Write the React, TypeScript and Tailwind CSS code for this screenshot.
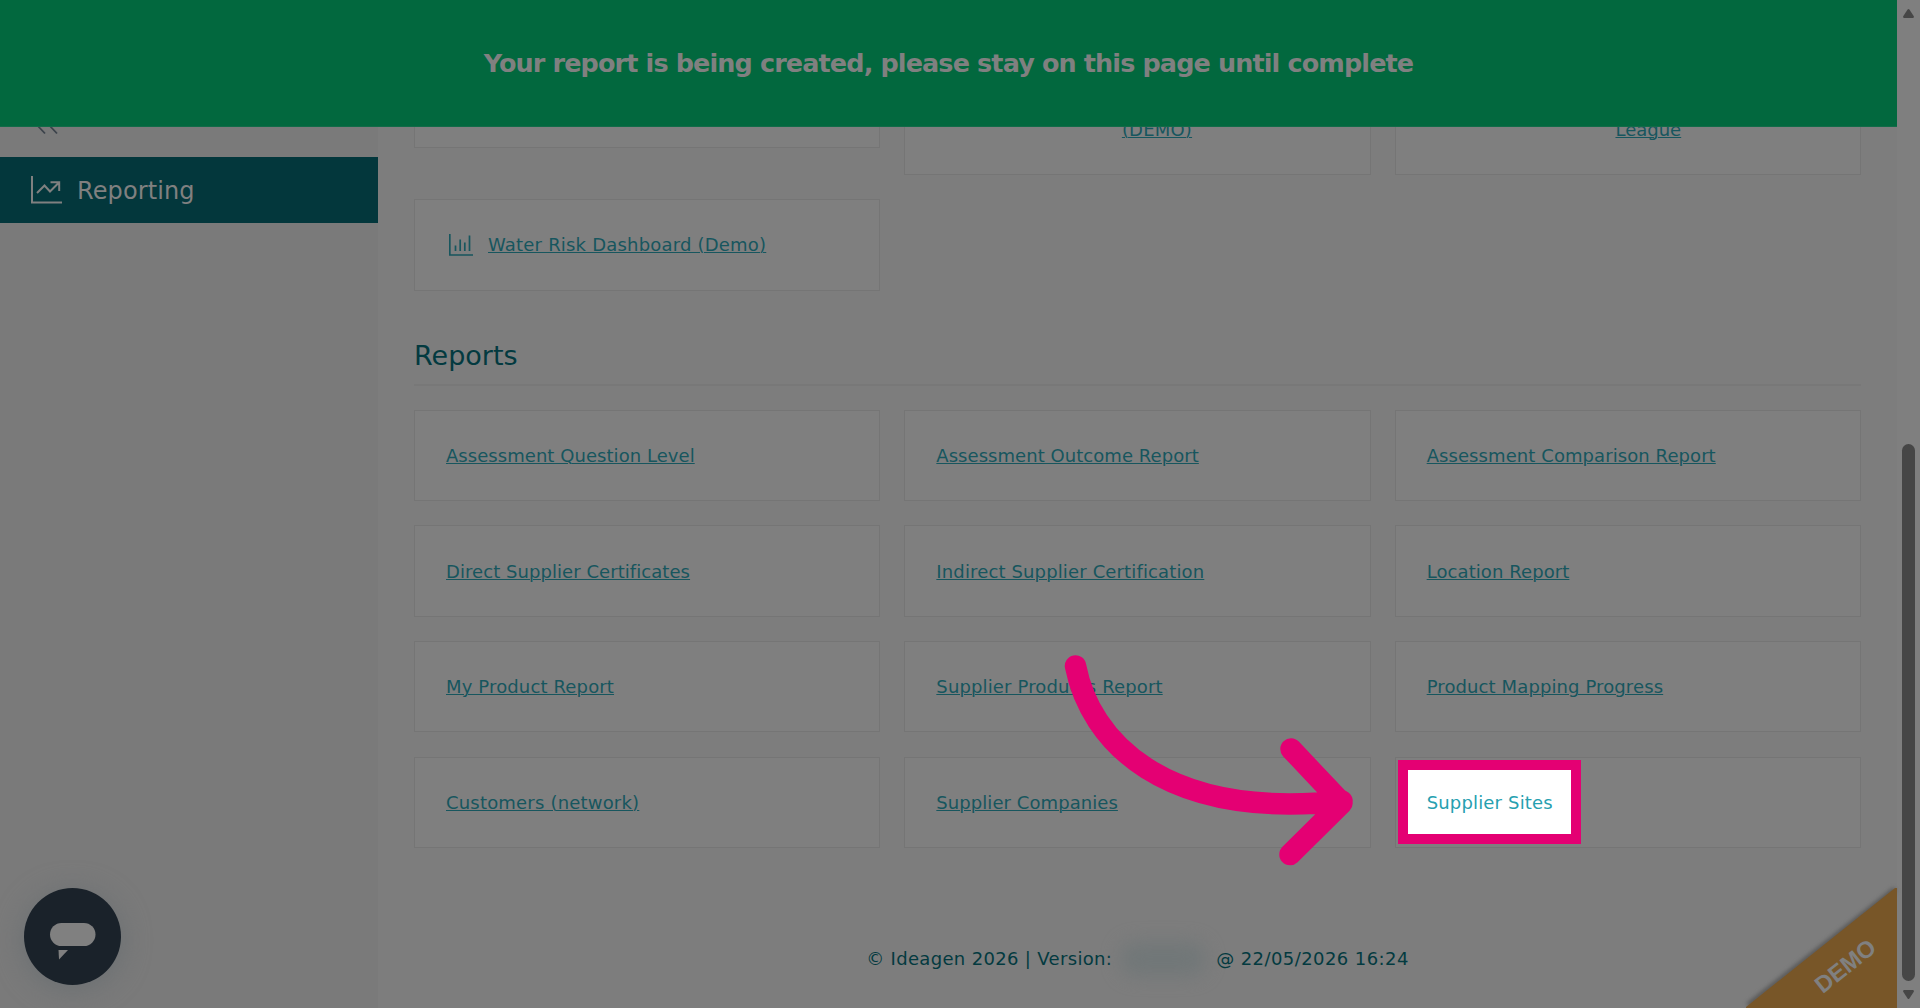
import type { ReactNode } from "react";

const REPORTS: { label: string; spacing: string; highlighted?: boolean }[] = [
  { label: "Assessment Question Level", spacing: "tracking-[0.05px]" },
  { label: "Assessment Outcome Report", spacing: "tracking-[0.05px]" },
  { label: "Assessment Comparison Report", spacing: "tracking-[0.08px]" },
  { label: "Direct Supplier Certificates", spacing: "tracking-[0.06px]" },
  { label: "Indirect Supplier Certification", spacing: "tracking-[0.14px]" },
  { label: "Location Report", spacing: "tracking-[0.08px]" },
  { label: "My Product Report", spacing: "tracking-[0.14px]" },
  { label: "Supplier Products Report", spacing: "tracking-[0.14px]" },
  { label: "Product Mapping Progress", spacing: "tracking-[0.11px]" },
  { label: "Customers (network)", spacing: "tracking-[0.19px]" },
  { label: "Supplier Companies", spacing: "tracking-[0.07px]" },
  { label: "Supplier Sites", spacing: "tracking-[0.17px]", highlighted: true },
];

function Card({ className, children }: { className: string; children?: ReactNode }) {
  return (
    <div className={`relative flex border border-[#757575] bg-[#7f7f7f] text-[#17565e] ${className}`}>
      {children}
    </div>
  );
}

const LINK = "underline decoration-1 underline-offset-1 whitespace-nowrap";

function Banner() {
  return (
    <div className="absolute top-0 left-0 z-10 flex h-[127px] w-[1897px] items-center justify-center border-b border-[#126b48] bg-[#02683e]">
      <span className="whitespace-nowrap text-[25.5px] leading-8 font-bold tracking-[-0.89px] text-[#808080]">
        Your report is being created, please stay on this page until complete
      </span>
    </div>
  );
}

function Sidebar() {
  return (
    <nav className="flex w-[377.5px] shrink-0 flex-col bg-[#7a7a7a] pt-[116px]">
      <svg className="ml-9 h-[41px] w-6 shrink-0" viewBox="0 0 24 41" fill="none" stroke="#3c434b" strokeWidth="1.8">
        <path d="M10 0 1.500 9.500 9 17.500M22 0 13.500 9.500 21 17.500" />
      </svg>
      <a className="flex h-[66px] items-center bg-[#03373c] pl-[31px] text-[#808080]">
        <svg className="h-7 w-[31px]" viewBox="0 0 31 28" fill="none" stroke="currentColor" strokeWidth="2">
          <path d="M1 0V26.500H31M6 17 13.500 9.500 19 15.500 28 6.500M19.500 6.200H28.200V15" />
        </svg>
        <span className="mt-[2px] ml-[15px] text-[24px] leading-8 tracking-[0.1px]">Reporting</span>
      </a>
    </nav>
  );
}

function ReportsGrid() {
  return (
    <div className="mt-[23.5px] grid grid-cols-3 gap-x-6 gap-y-[24.200px]">
      {REPORTS.map((r) => (
        <Card key={r.label} className="h-[91.500px] items-center pt-[1.2px] pl-[31px]">
          {r.highlighted && (
            <div className="absolute top-[2px] left-[2px] h-[84px] w-[183.500px] border-[10px] border-[#e40073] bg-white" />
          )}
          <a className={r.highlighted ? `relative whitespace-nowrap text-[#26a0b0] ${r.spacing}` : `${LINK} ${r.spacing}`}>
            {r.label}
          </a>
        </Card>
      ))}
    </div>
  );
}

function Footer() {
  return (
    <footer className="mt-[99px] flex h-6 items-center justify-center text-[18px] whitespace-nowrap text-[#033a40]">
      <span className="tracking-[0.33px]">© Ideagen 2026 | Version:</span>
      <span className="mr-[10px] ml-[8px] h-[34px] w-[86px] rounded-full bg-[#717778] blur-[9px]" />
      <span className="tracking-[0.42px]">@ 22/05/2026 16:24</span>
    </footer>
  );
}

function Scrollbar() {
  return (
    <div className="flex w-[23px] shrink-0 flex-col items-center bg-[#7f7f7f]">
      <svg className="mt-[9px] h-[9px] w-[11px] shrink-0" viewBox="0 0 11 9" fill="#464646">
        <path d="M4.600.6Q5.500-.4 6.400.6L10.800 7.300Q11.200 9 9.800 9H1.200Q-.2 9 .2 7.300Z" />
      </svg>
      <div className="mt-[426px] h-[537px] w-[13px] rounded-full bg-[#464646]" />
      <svg className="mt-[9px] h-[9px] w-[11px] shrink-0" viewBox="0 0 11 9" fill="#464646">
        <path d="M4.600 8.400Q5.500 9.400 6.400 8.400L10.800 1.700Q11.200 0 9.800 0H1.200Q-.2 0 .2 1.700Z" />
      </svg>
    </div>
  );
}

export default function App() {
  return (
    <div className="relative flex h-[1008px] w-[1920px] overflow-hidden bg-[#7d7d7d] font-['DejaVu_Sans',Verdana,sans-serif] text-[18px] leading-6">
      <Banner />
      <Sidebar />
      <main className="min-w-0 flex-1 pt-[60px] pr-9 pl-[36.5px]">
        <div className="grid grid-cols-3 items-start gap-x-6">
          <Card className="h-[88px]" />
          <Card className="h-[115px] items-end justify-center pb-[32px] pl-[39px]">
            <a className={`tracking-[0.2px] ${LINK}`}>(DEMO)</a>
          </Card>
          <Card className="h-[115px] items-end justify-center pb-[32px] pl-[41px]">
            <a className={LINK}>League</a>
          </Card>
        </div>
        <div className="mt-[24px] grid grid-cols-3 gap-x-6">
          <Card className="h-[92px] items-center pl-[34px]">
            <svg className="h-[22px] w-6" viewBox="0 0 24 22" fill="none" stroke="currentColor" strokeWidth="1.700">
              <path d="M.8 0V21H24M6.500 11.500V17M11.200 5.500V17M15.800 8.500V17M20.500 1.500V17" />
            </svg>
            <a className={`ml-[15px] tracking-[0.2px] ${LINK}`}>Water Risk Dashboard (Demo)</a>
          </Card>
        </div>
        <h2 className="mt-[45px] h-[50px] border-b-2 border-[#787878] pt-[2px] text-[27px] leading-9 text-[#033a40]">Reports</h2>
        <ReportsGrid />
        <Footer />
      </main>
      <Scrollbar />
      <svg className="absolute top-[640px] left-[1050px] h-[240px] w-[320px]" viewBox="1050 640 320 240" fill="none" stroke="#e40073" strokeWidth="21.500" strokeLinecap="round" strokeLinejoin="round">
        <path d="M1075.500 666C1090 740 1162 820 1342 801M1291 749 1342 803 1290 854.500" />
      </svg>
      <button className="absolute top-[887.5px] left-6 flex size-[97px] items-center justify-center rounded-full bg-[#1a222a] shadow-[0_4px_28px_#6a6f72]">
        <svg className="size-[97px]" viewBox="0 0 97 97" fill="#808080">
          <rect x="26" y="35" width="45.500" height="23" rx="11.500" />
          <path d="M34.500 62H44L35 71.500Z" />
        </svg>
      </button>
      <div className="absolute right-[23px] bottom-0 h-[121px] w-[151px]">
        <svg className="size-full overflow-visible" viewBox="0 0 151 121">
          <path d="M2 118 149 2" stroke="#4f4f4f" strokeWidth="4" className="blur-[2px]" />
          <path d="M0 121V120L149 1H151V121Z" fill="#785628" />
        </svg>
        <span className="absolute top-[67px] left-[64px] -rotate-[38.500deg] font-['Liberation_Sans',Arial,sans-serif] text-[23.5px] leading-6 font-bold text-[#808080]">
          DEMO
        </span>
      </div>
    </div>
  );
}
